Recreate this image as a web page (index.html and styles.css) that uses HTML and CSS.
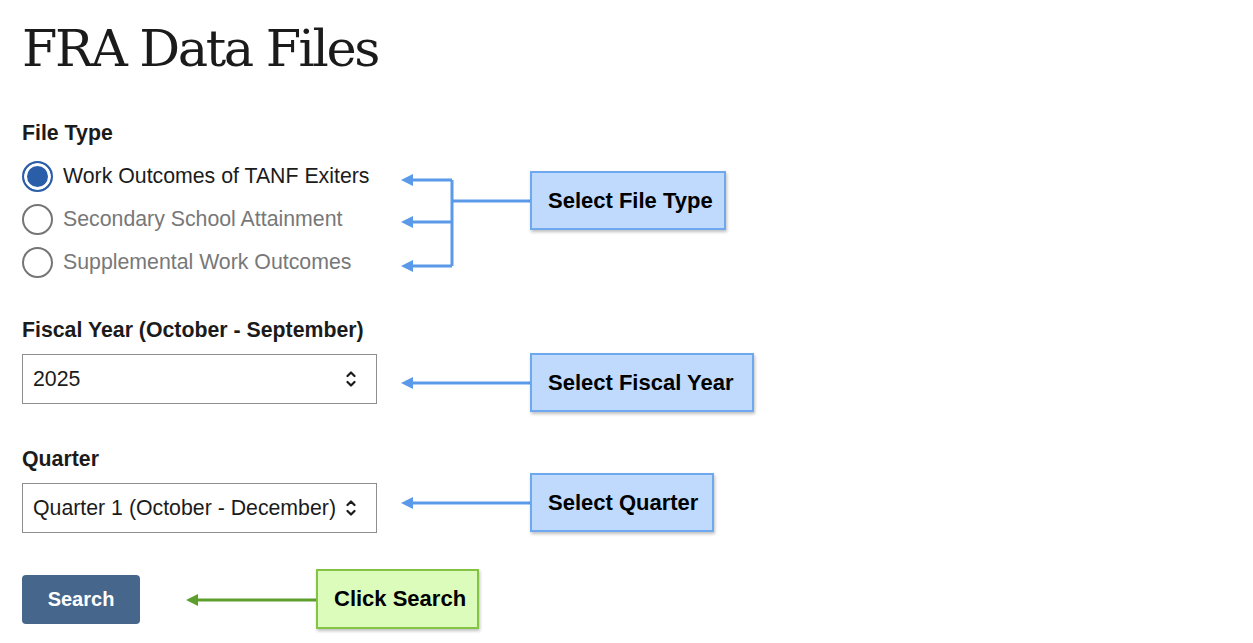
FILE: index.html
```html
<!DOCTYPE html>
<html lang="en">
<head>
<meta charset="utf-8">
<title>FRA Data Files</title>
<link rel="stylesheet" href="styles.css">
</head>
<body>
<main class="page">
  <h1 class="title">FRA Data Files</h1>
  <form class="form">
    <fieldset class="group">
      <legend class="label">File Type</legend>
      <label class="radio-row">
        <span class="radio checked"></span>
        <span class="radio-text selected">Work Outcomes of TANF Exiters</span>
      </label>
      <label class="radio-row">
        <span class="radio"></span>
        <span class="radio-text">Secondary School Attainment</span>
      </label>
      <label class="radio-row">
        <span class="radio"></span>
        <span class="radio-text">Supplemental Work Outcomes</span>
      </label>
    </fieldset>

    <div class="field field-year">
      <div class="label">Fiscal Year (October - September)</div>
      <div class="select">
        <span class="select-value">2025</span>
        <svg class="chev" width="10" height="20" viewBox="0 0 10 20"><path d="M1.5 7 L5 3.5 L8.5 7 M1.5 13 L5 16.5 L8.5 13" fill="none" stroke="#1b1b1b" stroke-width="2.2" stroke-linecap="round" stroke-linejoin="round"/></svg>
      </div>
    </div>

    <div class="field field-quarter">
      <div class="label">Quarter</div>
      <div class="select">
        <span class="select-value">Quarter 1 (October - December)</span>
        <svg class="chev" width="10" height="20" viewBox="0 0 10 20"><path d="M1.5 7 L5 3.5 L8.5 7 M1.5 13 L5 16.5 L8.5 13" fill="none" stroke="#1b1b1b" stroke-width="2.2" stroke-linecap="round" stroke-linejoin="round"/></svg>
      </div>
    </div>

    <button type="button" class="btn">Search</button>
  </form>

  <svg class="arrows" width="1253" height="643" viewBox="0 0 1253 643">
    <g fill="none" stroke="#5b9ae8" stroke-width="3">
      <path d="M452 180 V266"/>
      <path d="M452 201 H531"/>
      <path d="M452 180 H410"/>
      <path d="M452 222 H410"/>
      <path d="M452 266 H410"/>
      <path d="M531 383 H410"/>
      <path d="M531 503 H410"/>
    </g>
    <g fill="#5b9ae8">
      <path d="M401 180 L413 174 L413 186 Z"/>
      <path d="M401 222 L413 216 L413 228 Z"/>
      <path d="M401 266 L413 260 L413 272 Z"/>
      <path d="M401 383 L413 377 L413 389 Z"/>
      <path d="M401 503 L413 497 L413 509 Z"/>
    </g>
    <path d="M316 600 H196" fill="none" stroke="#5c9f2e" stroke-width="3"/>
    <path d="M186 600 L198 594 L198 606 Z" fill="#5c9f2e"/>
  </svg>

  <div class="callout blue c-type">Select File Type</div>
  <div class="callout blue c-year">Select Fiscal Year</div>
  <div class="callout blue c-quarter">Select Quarter</div>
  <div class="callout green c-search">Click Search</div>
</main>
</body>
</html>
```

FILE: styles.css
```css
html, body {
  margin: 0;
  padding: 0;
  background: #ffffff;
}
.page {
  position: relative;
  width: 1253px;
  height: 643px;
  padding: 0 22px;
  box-sizing: border-box;
  font-family: "Liberation Sans", Arial, sans-serif;
  color: #1b1b1b;
  overflow: hidden;
}
.title {
  margin: 0;
  padding-top: 17px;
  font-family: "DejaVu Serif", "Liberation Serif", serif;
  font-weight: 400;
  font-size: 51px;
  line-height: 64px;
  letter-spacing: -2.4px;
  color: #1b1b1b;
}
.form {
  display: flex;
  flex-direction: column;
  align-items: flex-start;
}
.group {
  border: 0;
  margin: 0;
  padding: 0;
  margin-top: 40px;
  display: flex;
  flex-direction: column;
}
.label {
  font-size: 21.3px;
  line-height: 24px;
  font-weight: 700;
  padding: 0;
  color: #1b1b1b;
}
.group .label {
  margin-bottom: 10px;
}
.radio-row {
  height: 43px;
  display: flex;
  align-items: center;
  gap: 10px;
}
.radio {
  width: 27px;
  height: 27px;
  border-radius: 50%;
  border: 2px solid #757575;
  box-sizing: content-box;
  background: #fff;
}
.radio.checked {
  border-color: #2a5ea8;
  background: #2a5ea8;
  box-shadow: inset 0 0 0 3px #fff;
}
.radio-text {
  font-size: 21.3px;
  color: #787878;
}
.radio-text.selected {
  color: #1b1b1b;
}
.field-year {
  margin-top: 34px;
}
.field-quarter {
  margin-top: 43px;
}
.field .label {
  margin-bottom: 12px;
}
.select {
  position: relative;
  width: 355px;
  height: 50px;
  box-sizing: border-box;
  border: 1px solid #8e8e8e;
  display: flex;
  align-items: center;
  padding-left: 10px;
  font-size: 21.3px;
  color: #1b1b1b;
}
.chev {
  position: absolute;
  right: 20px;
  top: 14px;
}
.btn {
  margin-top: 42px;
  width: 118px;
  height: 49px;
  border: 0;
  border-radius: 4px;
  background: #46668c;
  color: #ffffff;
  font-family: "Liberation Sans", Arial, sans-serif;
  font-size: 20px;
  font-weight: 700;
  padding: 0;
}
.arrows {
  position: absolute;
  left: 0;
  top: 0;
  pointer-events: none;
}
.callout {
  position: absolute;
  box-sizing: border-box;
  display: flex;
  align-items: center;
  padding-left: 16px;
  font-size: 22px;
  font-weight: 700;
  color: #000;
  box-shadow: 1px 2px 3px rgba(0, 0, 0, 0.25);
}
.callout.blue {
  background: #bfdafc;
  border: 2px solid #6ea8ef;
}
.callout.green {
  background: #dcfcbb;
  border: 2px solid #84c445;
}
.c-type { left: 530px; top: 171px; width: 196px; height: 59px; }
.c-year { left: 530px; top: 353px; width: 224px; height: 59px; }
.c-quarter { left: 530px; top: 473px; width: 184px; height: 59px; }
.c-search { left: 316px; top: 569px; width: 163px; height: 60px; }
```
